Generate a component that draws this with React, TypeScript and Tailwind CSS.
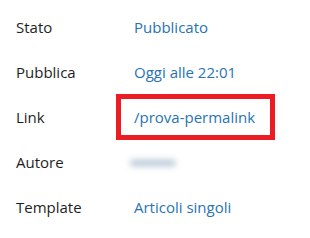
import React from "react";

const rows = [
  { label: "Stato", value: "Pubblicato" },
  { label: "Pubblica", value: "Oggi alle 22:01" },
  { label: "Link", value: "/prova-permalink", boxed: true },
  { label: "Autore", value: "", blurred: true },
  { label: "Template", value: "Articoli singoli" },
];

export default function App() {
  return (
    <div
      className="w-[310px] h-[238px] bg-white pt-[5px] px-4 text-[15px]"
      style={{ fontFamily: '"Open Sans", "Noto Sans", sans-serif' }}
    >
      {rows.map((r) => (
        <div key={r.label} className="flex items-center h-[45px]">
          <div className="w-[118px] text-[#1e1e1e]">{r.label}</div>
          <div className="relative text-[#2874b2]">
            {r.blurred ? (
              <div className="w-[46px] h-[6px] rounded-full bg-[#b3c3d4] blur-[3px] -ml-[4px]" />
            ) : (
              <span>{r.value}</span>
            )}
            {r.boxed && (
              <div className="absolute -left-[18px] -right-[20px] -top-[12px] -bottom-[11px] border-[5px] border-[#ec1c24]" />
            )}
          </div>
        </div>
      ))}
    </div>
  );
}
